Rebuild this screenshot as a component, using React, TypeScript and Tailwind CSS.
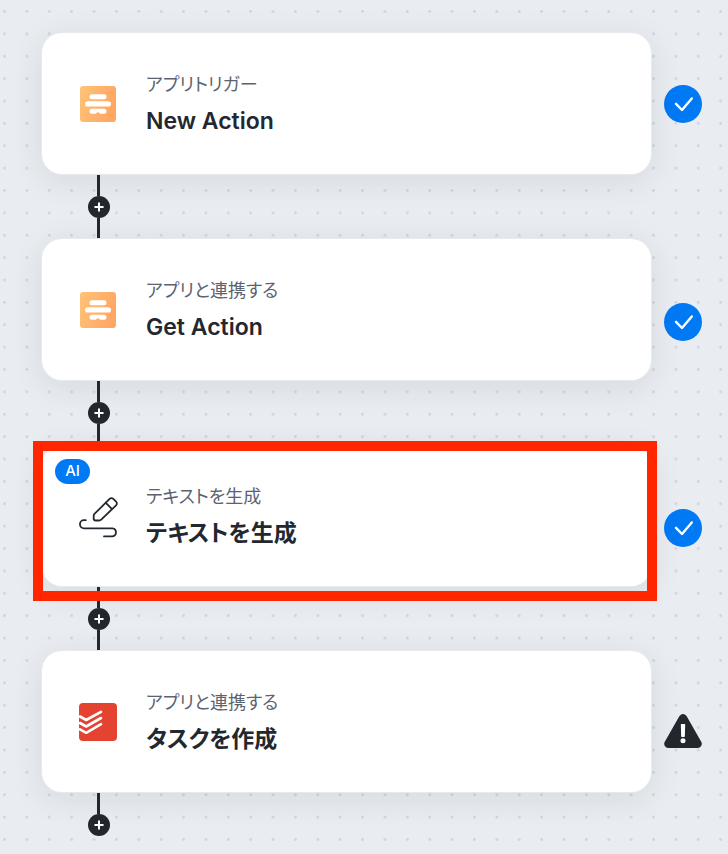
import React from 'react';

type Status = 'done' | 'warning';

interface Step {
    label: string;
    title: string;
    icon: React.FC;
    status: Status;
    ai?: boolean;
    highlighted?: boolean;
}

const FormIcon: React.FC = () => (
    <svg className="w-9 h-9" viewBox="0 0 36 36" aria-hidden="true">
        <defs>
            <linearGradient id="form-fill" x1="0" y1="0" x2="1" y2="0.3">
                <stop offset="0" stopColor="#ffc377" />
                <stop offset="1" stopColor="#ffa765" />
            </linearGradient>
        </defs>
        <rect width="36" height="36" rx="3" fill="url(#form-fill)" />
        <rect x="9.500" y="8.200" width="17" height="5" rx="2.500" fill="#fff" />
        <rect x="5" y="15.300" width="26" height="5.200" rx="2.600" fill="#fff" />
        <path d="M12 22.800h12a2.500 2.500 0 0 1 0 5h-3.600c-.6 0-.8-1.500-2.400-1.500s-1.800 1.500-2.400 1.500H12a2.500 2.500 0 0 1 0-5z" fill="#fff" />
    </svg>
);

const PencilIcon: React.FC = () => (
    <svg className="w-10 h-11" viewBox="0 0 40 44" fill="none" stroke="#23282f" strokeWidth="1.800" strokeLinecap="round" strokeLinejoin="round" aria-hidden="true">
        <g transform="translate(1 -1)">
            <path d="M15.200 21.200 30.600 5.800a2.600 2.600 0 0 1 3.700 0l2.800 2.800a2.600 2.600 0 0 1 0 3.700L22.200 26.600a3 3 0 0 1-2.100.9h-3.400a2 2 0 0 1-2-2v-2.900c0-.6.1-1 .5-1.400z" />
            <path d="M26.800 9.800l6 6" />
            <path d="M6.800 27.200H5a3.900 3.900 0 0 0 0 8.100h28.500a4.100 4.100 0 0 1 0 8.100H25" />
        </g>
    </svg>
);

const TodoIcon: React.FC = () => (
    <svg className="w-9.5 h-9.5" viewBox="0 0 38 38" aria-hidden="true">
        <rect width="38" height="38" rx="4" fill="#e44332" />
        <g fill="none" stroke="#fff" strokeWidth="2.600" strokeLinecap="round" strokeLinejoin="round">
            <path d="M1 13.500l6.200 3.500L22 8.800" />
            <path d="M1 20l6.200 3.500L22 15" />
            <path d="M1 26.300l6.200 3.500L22 21.200" />
        </g>
    </svg>
);

const StatusIcon: React.FC<{ status: Status }> = ({ status }) => {
    if (status === 'warning') {
        return (
            <svg className="w-9.5 h-9" viewBox="0 0 38 36" role="img" aria-label="警告">
                <path d="M15.300 3.200a4.300 4.300 0 0 1 7.400 0l14.500 25.500a4.200 4.200 0 0 1-3.700 6.300H4.500a4.200 4.200 0 0 1-3.700-6.300z" fill="#23282f" />
                <path d="M17.400 11.500h3.200l-.4 11.800h-2.400z" fill="#fff" stroke="#fff" strokeWidth="1.200" strokeLinejoin="round" />
                <circle cx="19" cy="27.800" r="2.500" fill="#fff" />
            </svg>
        );
    }
    return (
        <svg className="w-9.5 h-9.5" viewBox="0 0 38 38" role="img" aria-label="完了">
            <circle cx="19" cy="19" r="19" fill="#0079f5" />
            <path d="M12 18.800l6 6.200 9.800-11.500" fill="none" stroke="#fff" strokeWidth="2.400" strokeLinecap="round" strokeLinejoin="round" />
        </svg>
    );
};

const Connector: React.FC<{ last: boolean }> = ({ last }) => (
    <div className="ml-[46px] w-[22px] flex flex-col">
        <div className="ml-[9px] w-[3px] h-[22px] bg-[#23282f]"></div>
        <button type="button" aria-label="ステップを追加" className="w-[22px] h-[22px] rounded-full bg-[#23282f] flex items-center justify-center">
            <svg className="w-2.5 h-2.5" viewBox="0 0 10 10" stroke="#fff" strokeWidth="2" strokeLinecap="round" aria-hidden="true">
                <path d="M5 1.200v7.600M1.200 5h7.600" />
            </svg>
        </button>
        {!last && <div className="ml-[9px] w-[3px] h-[21px] bg-[#23282f]"></div>}
    </div>
);

const steps: Step[] = [
    { label: 'アプリトリガー', title: 'New Action', icon: FormIcon, status: 'done' },
    { label: 'アプリと連携する', title: 'Get Action', icon: FormIcon, status: 'done' },
    { label: 'テキストを生成', title: 'テキストを生成', icon: PencilIcon, status: 'done', ai: true, highlighted: true },
    { label: 'アプリと連携する', title: 'タスクを作成', icon: TodoIcon, status: 'warning' },
];

const StepRow: React.FC<{ step: Step; first: boolean }> = ({ step, first }) => {
    const Icon = step.icon;

    return (
        <div className="flex gap-[13px]">
            <article className="relative flex-1 h-[141px] flex items-center gap-7 pl-9 bg-white rounded-[20px] ring-1 ring-[#e6eaee] shadow-[0_6px_32px_rgba(40,52,52,0.10)]">
                <div className="w-10 flex justify-center">
                    <Icon />
                </div>
                <div className="flex flex-col gap-2 pt-0.5 [font-feature-settings:'palt']">
                    <p className="text-[18px] leading-6 text-[#5c6370]">{step.label}</p>
                    <h2 className="text-[23px] leading-8 font-semibold text-[#23282f]">{step.title}</h2>
                </div>
                {step.ai && (
                    <span className="absolute top-3.5 left-[13px] w-[35px] h-[25px] rounded-full bg-[#0079f5] flex items-center justify-center text-[15px] font-medium text-white">
                        AI
                    </span>
                )}
                {step.highlighted && (
                    <div className="absolute -top-1 -left-[9px] -right-1.5 -bottom-[15px] z-10 border-[10px] border-[#ff2600] pointer-events-none"></div>
                )}
            </article>
            <div className={`flex items-center ${first ? '' : step.status === 'done' ? 'pt-6' : 'pt-4.5'}`}>
                <StatusIcon status={step.status} />
            </div>
        </div>
    );
};

export default function App() {
    return (
        <main className="relative isolate min-h-screen overflow-hidden bg-[#e9ecf1] pt-8 pb-[18px] pl-[42px] pr-[26px] font-['Inter','Noto_Sans_CJK_JP',sans-serif]">
            {/* Dotted canvas */}
            <svg className="absolute inset-0 w-full h-full -z-10" aria-hidden="true">
                <defs>
                    <pattern id="dots" x="-6.700" y="0.300" width="22.380" height="22.380" patternUnits="userSpaceOnUse">
                        <circle cx="11.200" cy="11.200" r="1.400" fill="#cfd4da" />
                    </pattern>
                </defs>
                <rect width="100%" height="100%" fill="url(#dots)" />
            </svg>

            <ol className="pt-px">
                {steps.map((step, i) => (
                    <li key={i}>
                        <StepRow step={step} first={i === 0} />
                        <Connector last={i === steps.length - 1} />
                    </li>
                ))}
            </ol>
        </main>
    );
}
